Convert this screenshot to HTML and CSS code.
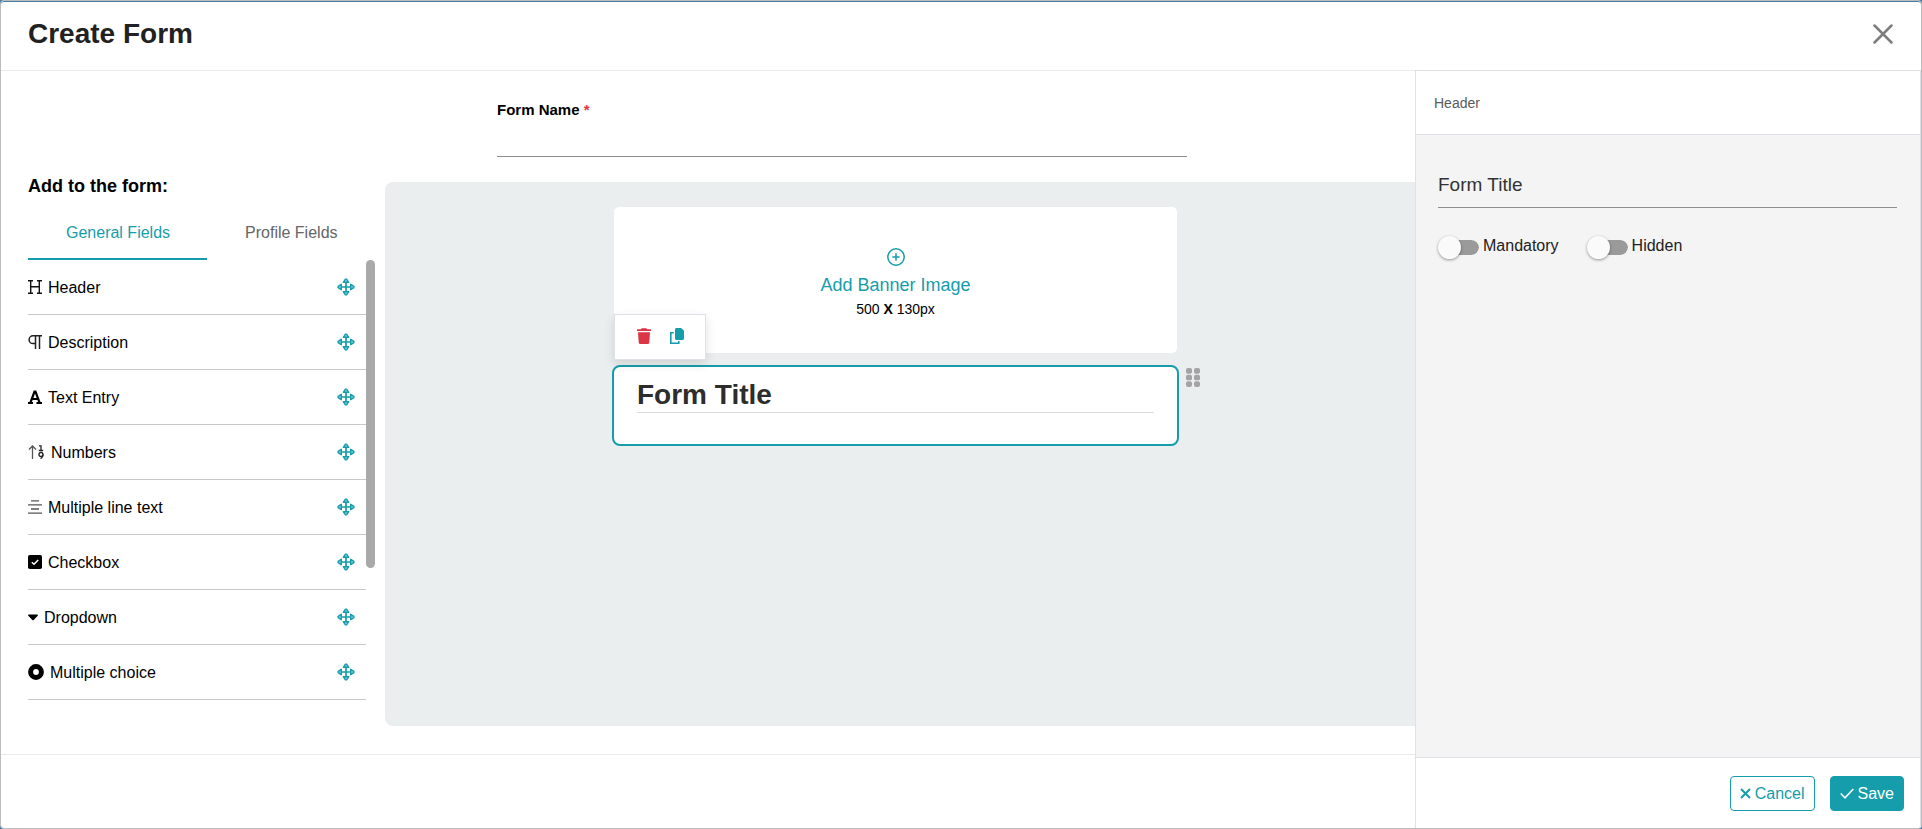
FILE: index.html
```html
<!DOCTYPE html>
<html lang="en">
<head>
<meta charset="utf-8">
<meta name="viewport" content="width=device-width, initial-scale=1">
<title>Create Form</title>
<link rel="stylesheet" href="styles.css">
</head>
<body>
<svg class="sprite" aria-hidden="true">
  <symbol id="move" viewBox="0 0 18 18">
    <path d="M9 4.500v9M4.500 9h9" stroke-width="1.700"/>
    <path d="M6.300 4.300 8.400 1.100h1.200L11.700 4.300zM6.300 13.700 8.400 16.900h1.200L11.700 13.700zM4.300 6.300 1.100 8.400v1.200L4.300 11.700zM13.700 6.300 16.900 8.400v1.200L13.700 11.700z" fill="#8fd0d7" stroke-width="1.400" stroke-linejoin="round"/>
  </symbol>
</svg>
<main class="modal">
  <header class="modal-header">
    <h1 class="modal-title">Create Form</h1>
    <button class="close" type="button" aria-label="Close">
      <svg width="20" height="20" viewBox="0 0 20 20"><path d="M1.500 1.500l17 17M18.500 1.500l-17 17" stroke="#7d7d7d" stroke-width="2.500" stroke-linecap="round"/></svg>
    </button>
  </header>
  <div class="modal-body">
    <div class="editor">
      <div class="workspace">
        <aside class="palette">
          <h2 class="palette-title">Add to the form:</h2>
          <div class="tabs" role="tablist">
            <button class="tab tab-active" type="button" role="tab" aria-selected="true">General Fields</button>
            <button class="tab" type="button" role="tab" aria-selected="false">Profile Fields</button>
          </div>
          <div class="scroller">
            <ul class="fields">
              <li class="field">
                <svg width="14" height="14" viewBox="0 0 14 14" fill="none" stroke="#111" stroke-width="1.400"><path d="M0 .8h5M9 .8h5M0 13.200h5M9 13.200h5M2.700 1v12M11.300 1v12M2.700 6.800h8.600"/></svg>
                <span class="field-name">Header</span><svg class="move"><use href="#move"/></svg>
              </li>
              <li class="field">
                <svg width="14" height="14" viewBox="0 0 14 14" fill="none" stroke="#222" stroke-width="1.500"><path d="M14 .8H5a3.800 3.800 0 0 0 0 7.800h2.600M7.500 1v13M11.500 1v13"/></svg>
                <span class="field-name">Description</span><svg class="move"><use href="#move"/></svg>
              </li>
              <li class="field">
                <svg width="14" height="14" viewBox="0 0 14 14" fill="none" stroke="#000"><path d="M0 13h5M8.500 13H14" stroke-width="2"/><path d="M2.500 12.500 6.500 1.500h1L11.500 12.500M4 9h6" stroke-width="2.200"/></svg>
                <span class="field-name">Text Entry</span><svg class="move"><use href="#move"/></svg>
              </li>
              <li class="field">
                <svg width="17" height="14" viewBox="0 0 17 14" fill="none" stroke="#222" stroke-width="1.300"><path d="M4.500 14V1M1 4.500 4.500 1 8 4.500" stroke="#555"/><path d="M11 .8h2V5.500M10.800 5.500h4.400"/><circle cx="13" cy="9.500" r="2"/><path d="M15 9.500c0 2-.7 3.500-2.500 4.100"/></svg>
                <span class="field-name">Numbers</span><svg class="move"><use href="#move"/></svg>
              </li>
              <li class="field">
                <svg width="14" height="14" viewBox="0 0 14 14" stroke="#555" stroke-width="1.300"><path d="M3 .8h8M0 4.900h14M3 9h8M0 13.200h14"/></svg>
                <span class="field-name">Multiple line text</span><svg class="move"><use href="#move"/></svg>
              </li>
              <li class="field">
                <svg width="14" height="14" viewBox="0 0 14 14"><rect width="14" height="14" rx="1.800"/><path d="M3.800 7.200 6 9.300l4.200-4.400" fill="none" stroke="#fff" stroke-width="1.500"/></svg>
                <span class="field-name">Checkbox</span><svg class="move"><use href="#move"/></svg>
              </li>
              <li class="field">
                <svg width="10" height="14" viewBox="0 0 10 14"><path d="M.8 4.500h8.400c.7 0 1 .7.5 1.200L5.700 10c-.4.400-1 .400-1.400 0L.3 5.700c-.5-.5-.2-1.200.5-1.200z"/></svg>
                <span class="field-name">Dropdown</span><svg class="move"><use href="#move"/></svg>
              </li>
              <li class="field">
                <svg width="16" height="16" viewBox="0 0 16 16"><circle cx="8" cy="8" r="5.400" fill="none" stroke="#000" stroke-width="5"/></svg>
                <span class="field-name">Multiple choice</span><svg class="move"><use href="#move"/></svg>
              </li>
            </ul>
            <div class="scrollbar"><div class="scroll-thumb"></div></div>
          </div>
        </aside>
        <section class="builder">
          <div class="form-name">
            <label class="form-name-label" for="form-name">Form Name <span class="required">*</span></label>
            <input class="line-input" id="form-name" type="text">
          </div>
          <div class="canvas">
            <div class="sheet">
              <button class="banner" type="button">
                <svg width="18" height="18" viewBox="0 0 18 18" fill="none" stroke="#159dab" stroke-width="1.500"><circle cx="9" cy="9" r="8.200"/><path d="M9 5.300v7.400M5.300 9h7.400"/></svg>
                <span class="banner-title">Add Banner Image</span>
                <span class="banner-size">500 <b>X</b> 130px</span>
              </button>
              <div class="block">
                <div class="block-tools">
                  <button class="tool" type="button" aria-label="Delete">
                    <svg width="14" height="16" viewBox="0 0 14 16" fill="#dc3545"><path d="M0 1.200h4L4.600.2h4.800l.6 1H14V3H0zM1 4.200h12l-.7 10.300c-.1.900-.7 1.500-1.500 1.500H3.200c-.8 0-1.400-.6-1.500-1.500z"/></svg>
                  </button>
                  <button class="tool" type="button" aria-label="Duplicate">
                    <svg width="14" height="16" viewBox="0 0 14 16" fill="#159dab"><path d="M6.500 0h4.700L14 2.800v7.700c0 .8-.7 1.500-1.500 1.500h-6c-.8 0-1.500-.7-1.500-1.500v-9C5 .7 5.700 0 6.500 0z"/><path d="M3.800 4.800h-3v10.400h8V13" fill="none" stroke="#159dab" stroke-width="1.600"/></svg>
                  </button>
                </div>
                <h2 class="block-title">Form Title</h2>
                <button class="drag" type="button" aria-label="Reorder">
                  <svg width="14" height="19" viewBox="0 0 14 20" preserveAspectRatio="none" fill="#a3a3a3"><rect width="6" height="6" rx="2"/><rect x="8" width="6" height="6" rx="2"/><rect y="7" width="6" height="6" rx="2"/><rect x="8" y="7" width="6" height="6" rx="2"/><rect y="14" width="6" height="6" rx="2"/><rect x="8" y="14" width="6" height="6" rx="2"/></svg>
                </button>
              </div>
            </div>
          </div>
        </section>
      </div>
      <footer class="editor-footer"></footer>
    </div>
    <aside class="props">
      <div class="props-header">Header</div>
      <div class="props-body">
        <input class="line-input props-input" type="text" value="Form Title" aria-label="Title text">
        <div class="switches">
          <label class="switch-label"><input class="switch" type="checkbox">Mandatory</label>
          <label class="switch-label"><input class="switch" type="checkbox">Hidden</label>
        </div>
      </div>
      <footer class="props-footer">
        <button class="btn btn-outline" type="button">
          <svg width="11" height="11" viewBox="0 0 11 11"><path d="M1 1l9 9M10 1l-9 9" stroke="currentColor" stroke-width="2"/></svg>Cancel
        </button>
        <button class="btn btn-solid" type="button">
          <svg width="14" height="11" viewBox="0 0 14 11"><path d="M.7 5.500 5 9.800 13.300 1" fill="none" stroke="currentColor" stroke-width="1.500"/></svg>Save
        </button>
      </footer>
    </aside>
  </div>
</main>
</body>
</html>
```
FILE: styles.css
```css
* { box-sizing: border-box; }

body {
  margin: 0;
  background: #4a7ba6;
  color: #000;
  font: 16px/20px "Liberation Sans", Arial, sans-serif;
}

button {
  padding: 0;
  border: 0;
  background: none;
  color: inherit;
  font: inherit;
  cursor: pointer;
}

svg { display: block; flex: none; }

.sprite { position: absolute; width: 0; height: 0; }

.modal {
  display: flex;
  flex-direction: column;
  min-height: 100vh;
  border: 1px solid #bcbcbc;
  border-radius: 4px;
  background: #fff;
  box-shadow: inset 0 1px #4a7ba6;
}

.modal-header {
  display: flex;
  align-items: center;
  justify-content: space-between;
  padding: 13px 28px 16px 27px;
  border-bottom: 1px solid #e9ecec;
}

.modal-title {
  margin: 0;
  color: #212121;
  font-size: 28px;
  line-height: 40px;
}

.modal-body { display: flex; flex: 1; }

.editor {
  display: flex;
  flex: 1;
  flex-direction: column;
  min-width: 0;
}

.workspace { display: flex; flex: 1; padding-bottom: 28px; }

.editor-footer { height: 74px; border-top: 1px solid #e9ecec; }

.palette {
  flex: none;
  width: 384px;
  padding: 103px 10px 0 27px;
}

.palette-title {
  margin: 0 0 20px;
  font-size: 18px;
  line-height: 24px;
}

.tabs { display: flex; }

.tab {
  height: 42px;
  padding: 0 37px 10px 38px;
  border-bottom: 2px solid transparent;
  color: #666;
  white-space: nowrap;
}

.tab-active { border-color: #159dab; color: #159dab; }

.scroller { display: flex; }

.fields {
  flex: 1;
  margin: 0;
  padding: 0;
  list-style: none;
}

.field {
  display: flex;
  align-items: center;
  gap: 6px;
  height: 55px;
  padding-right: 11px;
  border-bottom: 1px solid #c8c8c8;
}

.field-name { flex: 1; padding-top: 1px; }

.move {
  width: 18px;
  height: 18px;
  fill: none;
  stroke: #159dab;
}

.scrollbar { width: 9px; }

.scroll-thumb {
  height: 70%;
  border-radius: 5px;
  background: #a9a9a9;
}

.builder {
  display: flex;
  flex: 1;
  flex-direction: column;
  min-width: 0;
}

.form-name {
  width: 67%;
  margin-left: 112px;
  padding: 29px 0 25px;
}

.form-name-label {
  display: block;
  font-size: 15px;
  font-weight: bold;
}

.required { color: #dc3545; }

.line-input {
  display: block;
  width: 100%;
  height: 37px;
  padding: 0;
  border: 0;
  border-bottom: 1px solid #8c8f90;
  border-radius: 0;
  outline: 0;
  background: transparent;
  color: #333;
  font: inherit;
}

.canvas {
  display: flex;
  flex: 1;
  justify-content: center;
  padding: 25px 9px 25px 0;
  border-radius: 8px 0 0 8px;
  background: #eaeeef;
}

.sheet { width: 567px; }

.banner {
  display: flex;
  flex-direction: column;
  align-items: center;
  width: calc(100% - 4px);
  height: 146px;
  margin: 0 2px 12px;
  padding-top: 41px;
  border-radius: 5px;
  background: #fff;
}

.banner-title {
  margin-top: 7px;
  color: #159dab;
  font-size: 18px;
  line-height: 24px;
}

.banner-size { margin-top: 2px; font-size: 14px; }

.block {
  position: relative;
  padding: 11px 23px 31px;
  border: 2px solid #159dab;
  border-radius: 8px;
  background: #fff;
}

.block-title {
  margin: 0;
  border-bottom: 1px solid #dcdcdc;
  color: #2d2d2d;
  font-size: 28px;
  line-height: 34px;
}

.block-tools {
  position: absolute;
  bottom: 100%;
  left: 0;
  display: flex;
  gap: 19px;
  margin-bottom: 7px;
  padding: 13px 21px 15px 22px;
  border: 1px solid #dee2e6;
  background: #fff;
  box-shadow: 0 4px 10px rgba(0, 0, 0, 0.12);
}

.drag { position: absolute; top: 1px; left: calc(100% + 9px); }

.props {
  display: flex;
  flex: none;
  flex-direction: column;
  width: 506px;
  margin-top: -1px;
  border: 1px solid #dee2e6;
  border-bottom: 0;
}

.props-header {
  padding: 22px 18px 21px;
  border-bottom: 1px solid #dee2e6;
  color: #5a5a5a;
  font-size: 14px;
}

.props-body {
  flex: 1;
  padding: 30px 23px 30px 22px;
  background: #f4f4f4;
}

.props-input { height: 43px; padding-bottom: 2px; font-size: 19px; }

.switches { display: flex; gap: 28px; padding-top: 28px; }

.switch-label {
  display: flex;
  align-items: center;
  gap: 4px;
  color: #212121;
}

.switch {
  position: relative;
  width: 41px;
  height: 15px;
  margin: 2px 0 0;
  border-left: 2px solid transparent;
  border-radius: 8px;
  appearance: none;
  background: #9a9a9a padding-box;
}

.switch::before {
  position: absolute;
  top: -4px;
  left: -2px;
  width: 23px;
  height: 23px;
  border-radius: 50%;
  background: #fafafa;
  box-shadow: 0 1px 3px rgba(0, 0, 0, 0.4);
  content: "";
}

.switch:checked::before { left: 16px; }

.props-footer {
  display: flex;
  justify-content: flex-end;
  gap: 15px;
  padding: 18px 16px 17px;
  border-top: 1px solid #dee2e6;
}

.btn {
  display: flex;
  align-items: center;
  gap: 4px;
  height: 35px;
  padding: 0 9px;
  border: 1px solid #159dab;
  border-radius: 4px;
}

.btn-outline { color: #159dab; }

.btn-solid { background: #159dab; color: #fff; }
```
